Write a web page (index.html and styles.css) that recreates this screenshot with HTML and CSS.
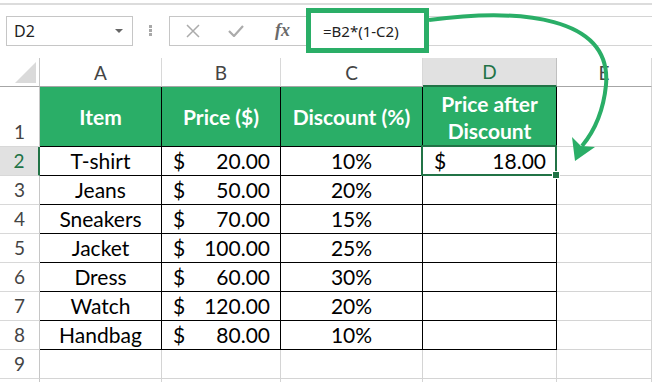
FILE: index.html
```html
<!DOCTYPE html>
<html lang="en">
  <head>
    <meta charset="UTF-8" />
    <meta name="viewport" content="width=device-width, initial-scale=1.0" />
    <title>Price after discount</title>
    <link rel="stylesheet" href="styles.css">
  </head>
  <body>
    <div class="window">
      <div class="ribbon-edge"></div>

      <!-- name box + formula bar -->
      <div class="toolbar">
        <div class="namebox">
          <span>D2</span>
          <span class="caret"></span>
        </div>
        <div class="grip"><i></i><i></i><i></i></div>
        <div class="fxbtns">
          <svg width="14" height="14" viewBox="0 0 14 14"><path d="M1 1 L13 13 M13 1 L1 13" stroke="#ababab" stroke-width="1.5" fill="none"/></svg>
          <svg width="16" height="12" viewBox="0 0 16 12"><path d="M1 6 L6 11 L15 1" stroke="#ababab" stroke-width="2.2" fill="none"/></svg>
          <span class="fx">fx</span>
        </div>
        <div class="formula">=B2*(1-C2)</div>
        <div class="formula-rest"></div>
      </div>

      <!-- sheet -->
      <div class="sheet">
        <div class="hd corner"><span class="tri"></span></div>
        <div class="hd">A</div>
        <div class="hd">B</div>
        <div class="hd">C</div>
        <div class="hd sel">D</div>
        <div class="hd">E</div>

        <div class="rh tall">1</div>
        <div class="c t g">Item</div>
        <div class="c t g">Price ($)</div>
        <div class="c t g">Discount (%)</div>
        <div class="c t g">Price after<br>Discount</div>
        <div class="c"></div>

        <div class="rh sel">2</div>
        <div class="c t">T-shirt</div>
        <div class="c t money"><span>$</span><span>20.00</span></div>
        <div class="c t">10%</div>
        <div class="c t money active"><span>$</span><span>18.00</span></div>
        <div class="c"></div>

        <div class="rh">3</div>
        <div class="c t">Jeans</div>
        <div class="c t money"><span>$</span><span>50.00</span></div>
        <div class="c t">20%</div>
        <div class="c t"></div>
        <div class="c"></div>

        <div class="rh">4</div>
        <div class="c t">Sneakers</div>
        <div class="c t money"><span>$</span><span>70.00</span></div>
        <div class="c t">15%</div>
        <div class="c t"></div>
        <div class="c"></div>

        <div class="rh">5</div>
        <div class="c t">Jacket</div>
        <div class="c t money"><span>$</span><span>100.00</span></div>
        <div class="c t">25%</div>
        <div class="c t"></div>
        <div class="c"></div>

        <div class="rh">6</div>
        <div class="c t">Dress</div>
        <div class="c t money"><span>$</span><span>60.00</span></div>
        <div class="c t">30%</div>
        <div class="c t"></div>
        <div class="c"></div>

        <div class="rh">7</div>
        <div class="c t">Watch</div>
        <div class="c t money"><span>$</span><span>120.00</span></div>
        <div class="c t">20%</div>
        <div class="c t"></div>
        <div class="c"></div>

        <div class="rh">8</div>
        <div class="c t">Handbag</div>
        <div class="c t money"><span>$</span><span>80.00</span></div>
        <div class="c t">10%</div>
        <div class="c t"></div>
        <div class="c"></div>

        <div class="rh">9</div>
        <div class="c"></div>
        <div class="c"></div>
        <div class="c"></div>
        <div class="c"></div>
        <div class="c"></div>

        <div class="rh"></div>
        <div class="c"></div>
        <div class="c"></div>
        <div class="c"></div>
        <div class="c"></div>
        <div class="c"></div>
      </div>

      <!-- callout arrow from formula to result -->
      <svg class="arrow" width="652" height="382" viewBox="0 0 652 382">
        <path d="M429 20 C520 8 612 16 606 85 C603 115 592 134 582 146" fill="none" stroke="#2aae67" stroke-width="4"/>
        <polygon points="572,137 581,146 595,147 575,161" fill="#2aae67"/>
      </svg>
    </div>
  </body>
</html>
```

FILE: styles.css
```css
* {
  margin: 0;
  box-sizing: border-box;
}
body {
  background: white;
  font-family: Lato, "Liberation Sans", sans-serif;
}

.window {
  position: relative;
  width: 652px;
  height: 382px;
  overflow: hidden;
  background: white;
}

.ribbon-edge {
  margin-top: 3px;
  height: 2px;
  background: #dcdcdc;
}

.toolbar {
  height: 53px;
  padding: 0 0 2px 6px;
  display: flex;
  align-items: center;
}

.namebox {
  width: 127px;
  height: 30px;
  border: 1px solid #c6c6c6;
  display: flex;
  align-items: center;
  justify-content: space-between;
  padding: 0 9px 0 7px;
  font-family: "Noto Sans", sans-serif;
  font-size: 16px;
  color: #222;
}
.caret {
  width: 0;
  height: 0;
  border-left: 4px solid transparent;
  border-right: 4px solid transparent;
  border-top: 4px solid #666;
}

.grip {
  margin-left: 16px;
  width: 4px;
  display: flex;
  flex-direction: column;
  gap: 1px;
}
.grip i {
  display: block;
  width: 3px;
  height: 3px;
  background: #a8a8a8;
}

.fxbtns {
  margin-left: 16px;
  width: 137px;
  height: 30px;
  border: 1px solid #c6c6c6;
  border-right: none;
  display: flex;
  align-items: center;
  gap: 28px;
  padding-left: 16px;
}
.fx {
  font-family: "Liberation Serif", serif;
  font-style: italic;
  font-weight: bold;
  font-size: 18px;
  color: #6a6a6a;
  margin-left: 3px;
}

.formula {
  width: 123px;
  height: 45px;
  border: 5px solid #2aae67;
  display: flex;
  align-items: center;
  padding-left: 12px;
  font-family: "Noto Sans", sans-serif;
  font-size: 15px;
  color: #222;
}
.formula-rest {
  flex: 1;
  height: 30px;
  border-top: 1px solid #d4d4d4;
  border-bottom: 1px solid #d4d4d4;
}

.sheet {
  display: grid;
  grid-template-columns: 40px 122px 119px 142px 134px 1fr;
  grid-template-rows: 29px 60px repeat(9, 29px);
  font-size: 21px;
  color: #000;
}

.hd {
  display: flex;
  align-items: center;
  justify-content: center;
  font-size: 19px;
  color: #444;
  border-right: 1px solid #d8d8d8;
  border-bottom: 1px solid #a6a6a6;
}
.hd.sel {
  background: #e1e1e1;
  color: #217346;
  border-bottom: 2px solid #217346;
  border-right-color: #c0c0c0;
}
.corner {
  position: relative;
  border-right-color: #c6c6c6;
}
.tri {
  position: absolute;
  left: 15px;
  bottom: 3px;
  width: 21px;
  height: 21px;
  background: #dadada;
  clip-path: polygon(100% 0, 100% 100%, 0 100%);
}

.rh {
  display: flex;
  align-items: flex-end;
  justify-content: center;
  padding-bottom: 3px;
  font-size: 19px;
  color: #444;
  border-right: 1px solid #c6c6c6;
  border-bottom: 1px solid #d8d8d8;
}
.rh.sel {
  background: #e1e1e1;
  color: #217346;
  border-right: 2px solid #217346;
}

.c {
  display: flex;
  align-items: flex-end;
  justify-content: center;
  padding-bottom: 2px;
  border-right: 1px solid #d4d4d4;
  border-bottom: 1px solid #d4d4d4;
  white-space: nowrap;
}
.t {
  border-right-color: #000;
  border-bottom-color: #000;
}
.g {
  background: #2aae67;
  color: white;
  font-weight: bold;
  align-items: center;
  text-align: center;
  line-height: 27px;
  padding-bottom: 0;
}
.money {
  justify-content: space-between;
  padding-left: 11px;
  padding-right: 10px;
}

.active {
  position: relative;
}
.active::after {
  content: "";
  position: absolute;
  left: -2px;
  top: -2px;
  right: -1px;
  bottom: -1px;
  border: 2px solid #217346;
}
.active::before {
  content: "";
  position: absolute;
  right: -4px;
  bottom: -4px;
  width: 6px;
  height: 6px;
  background: #217346;
  border: 1px solid white;
  z-index: 1;
}

.arrow {
  position: absolute;
  left: 0;
  top: 0;
  pointer-events: none;
}
```
